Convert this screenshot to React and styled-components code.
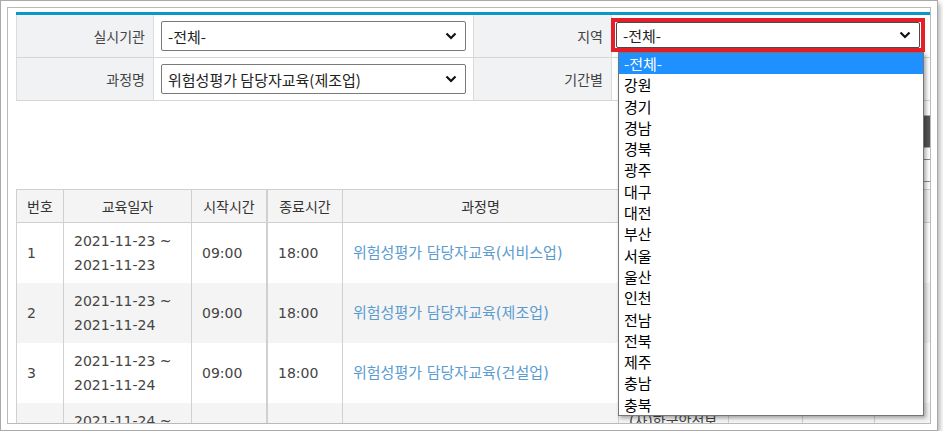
import React from "react"
import styled, { createGlobalStyle } from "styled-components"

const GlobalStyle = createGlobalStyle`
  body {
    margin: 0;
    background: #fff;
    font-family: "Noto Sans CJK KR", "Noto Sans", sans-serif;
  }
`;

// 캡처 창 테두리
const Outer = styled.div`
  box-sizing: border-box;
  width: 938px;
  height: 431px;
  padding: 6px;
  border: 1px solid #a9a9a9;
  background: #fff;
  box-shadow: 2px 3px 5px rgba(0, 0, 0, 0.3);
`;

const Screen = styled.div`
  box-sizing: border-box;
  height: 100%;
  border: 1px solid #bababa;
  overflow: hidden;
`;

const Page = styled.div`
  width: 1000px;
  padding: 4px 0 0 8px;
`;

const BlueBar = styled.div`
  height: 3px;
  background: #0a98c9;
`;

const SearchGrid = styled.div`
  display: grid;
  grid-template-columns: 137px 320px 138px 1fr;
  grid-auto-rows: 43px;
`;

const Label = styled.div`
  display: flex;
  align-items: center;
  justify-content: flex-end;
  padding-right: 8px;
  background: #f1f2f4;
  border-left: 1px solid #dcdcdc;
  border-bottom: 1px solid #d6d6d6;
  font-size: 14px;
  color: #444;
`;

const Value = styled.div`
  position: relative;
  display: flex;
  align-items: ${p => (p.$flush ? "flex-start" : "center")};
  padding-left: ${p => (p.$flush ? "0" : "7px")};
  background: #fff;
  border-left: 1px solid #dcdcdc;
  border-bottom: 1px solid #d6d6d6;
`;

const Select = styled.div`
  box-sizing: border-box;
  display: flex;
  align-items: center;
  justify-content: space-between;
  width: ${p => p.$w || "305px"};
  height: ${p => p.$h || "30px"};
  padding: 0 8px 0 6px;
  border: 1px solid ${p => p.$dark ? "#4a4a4a" : "#7a7a7a"};
  border-radius: 2px;
  background: #fff;
  font-size: 15px;
  color: #222;
  white-space: nowrap;
`;

// 캡처에 덧그린 빨간 표시
const Highlight = styled.div`
  position: relative;
  box-sizing: border-box;
  width: 314px;
  height: 34px;
  margin: 3px 0 0 -1px;
  border: 4px solid #e51f2a;
  padding: 0 1px;
`;

const Dropdown = styled.ul`
  position: absolute;
  z-index: 10;
  top: calc(100% + 4px);
  left: 3px;
  box-sizing: border-box;
  width: 306px;
  margin: 0;
  padding: 0;
  list-style: none;
  background: #fff;
  border: 1px solid #767676;
  box-shadow: 2px 2px 4px rgba(0, 0, 0, 0.35);
`;

const Option = styled.li`
  height: 21.3px;
  line-height: 21.3px;
  padding-left: 5px;
  font-size: 15px;
  color: ${p => (p.$active ? "#fff" : "#000")};
  background: ${p => (p.$active ? "#1e90ff" : "transparent")};
`;

const Toolbar = styled.div`
  box-sizing: border-box;
  height: 88px;
  padding-top: 14px;
  display: flex;
  flex-direction: column;
  align-items: flex-end;
  gap: 11px;
`;

const DarkButton = styled.div`
  box-sizing: border-box;
  width: 93px;
  height: 33px;
  border: 1px solid #b0b0b0;
  background: #555;
`;

const SmallSelect = styled.div`
  box-sizing: border-box;
  width: 93px;
  height: 23px;
  border: 1px solid #888;
  background: #fff;
`;

const Table = styled.table`
  width: 1000px;
  table-layout: fixed;
  border-collapse: collapse;
  border-top: 1px solid #cfcfcf;
`;

const Th = styled.th`
  width: ${p => p.$w}px;
  height: 32px;
  padding: 0;
  background: #f4f4f4;
  border: 1px solid #d0d0d0;
  border-right-width: ${p => (p.$thick ? "2px" : "1px")};
  font-size: 14px;
  font-weight: normal;
  color: #333;
  text-align: center;
`;

const Tr = styled.tr`
  background: ${p => (p.$alt ? "#f4f4f4" : "#fff")};
`;

const Td = styled.td`
  height: 60px;
  padding: 0 10px;
  border-left: 1px solid #d0d0d0;
  border-right: ${p => (p.$thick ? "2px" : "1px")} solid #d0d0d0;
  font-family: "DejaVu Sans", "Noto Sans CJK KR", sans-serif;
  font-size: ${p => (p.$link ? "15px" : "14px")};
  line-height: 24px;
  color: ${p => (p.$link ? "#5a9bd0" : "#444")};
  vertical-align: middle;
  white-space: ${p => (p.$wrap ? "normal" : "nowrap")};
  overflow: hidden;
`;

const Chevron = () => (
  <svg width="12" height="8" viewBox="0 0 12 8">
    <path d="M1.5 1.5 L6 6 L10.5 1.5" fill="none" stroke="#111" strokeWidth="2.2" />
  </svg>
)

const regions = ["-전체-", "강원", "경기", "경남", "경북", "광주", "대구", "대전", "부산", "서울", "울산", "인천", "전남", "전북", "제주", "충남", "충북"]

const rows = [
  { no: 1, from: "2021-11-23", to: "2021-11-23", course: "위험성평가 담당자교육(서비스업)", org: "(사)대한산업안전협회" },
  { no: 2, from: "2021-11-23", to: "2021-11-24", course: "위험성평가 담당자교육(제조업)", org: "(사)대한산업안전협회" },
  { no: 3, from: "2021-11-23", to: "2021-11-24", course: "위험성평가 담당자교육(건설업)", org: "(사)대한산업안전협회" },
  { no: 4, from: "2021-11-24", to: "2021-11-25", course: "위험성평가 담당자교육(제조업)", org: "(사)한국안전보건진흥원" },
]

// 열 너비는 접힌 테두리 몫(1px)을 뺀 값
const heads = [
  { t: "번호", w: 46 },
  { t: "교육일자", w: 127 },
  { t: "시작시간", w: 74, thick: true },
  { t: "종료시간", w: 74 },
  { t: "과정명", w: 275 },
  { t: "실시기관", w: 109 },
  { t: "지역", w: 73 },
  { t: "인원", w: 71 },
  { t: "신청", w: 142 },
]

function App() {
  return (
    <>
      <GlobalStyle />
      <Outer>
        <Screen>
          <Page>
            <BlueBar />
            <SearchGrid>
              <Label>실시기관</Label>
              <Value>
                <Select>-전체-<Chevron /></Select>
              </Value>
              <Label>지역</Label>
              <Value $flush>
                <Highlight>
                  <Select $w="100%" $h="26px" $dark>-전체-<Chevron /></Select>
                  <Dropdown>
                    {regions.map((r, i) => (
                      <Option key={r} $active={i === 0}>{r}</Option>
                    ))}
                  </Dropdown>
                </Highlight>
              </Value>

              <Label>과정명</Label>
              <Value>
                <Select>위험성평가 담당자교육(제조업)<Chevron /></Select>
              </Value>
              <Label>기간별</Label>
              <Value>
                <Select>-전체-<Chevron /></Select>
              </Value>
            </SearchGrid>

            <Toolbar>
              <DarkButton />
              <SmallSelect />
            </Toolbar>

            <Table>
              <thead>
                <tr>
                  {heads.map(h => (
                    <Th key={h.t} $w={h.w} $thick={h.thick}>{h.t}</Th>
                  ))}
                </tr>
              </thead>
              <tbody>
                {rows.map((r, i) => (
                  <Tr key={r.no} $alt={i % 2 === 1}>
                    <Td>{r.no}</Td>
                    <Td>{r.from} ~<br />{r.to}</Td>
                    <Td $thick>09:00</Td>
                    <Td>18:00</Td>
                    <Td $link>{r.course}</Td>
                    <Td $wrap>{r.org}</Td>
                    <Td>서울</Td>
                    <Td>30</Td>
                    <Td>신청</Td>
                  </Tr>
                ))}
              </tbody>
            </Table>
          </Page>
        </Screen>
      </Outer>
    </>
  )
}

export default App
